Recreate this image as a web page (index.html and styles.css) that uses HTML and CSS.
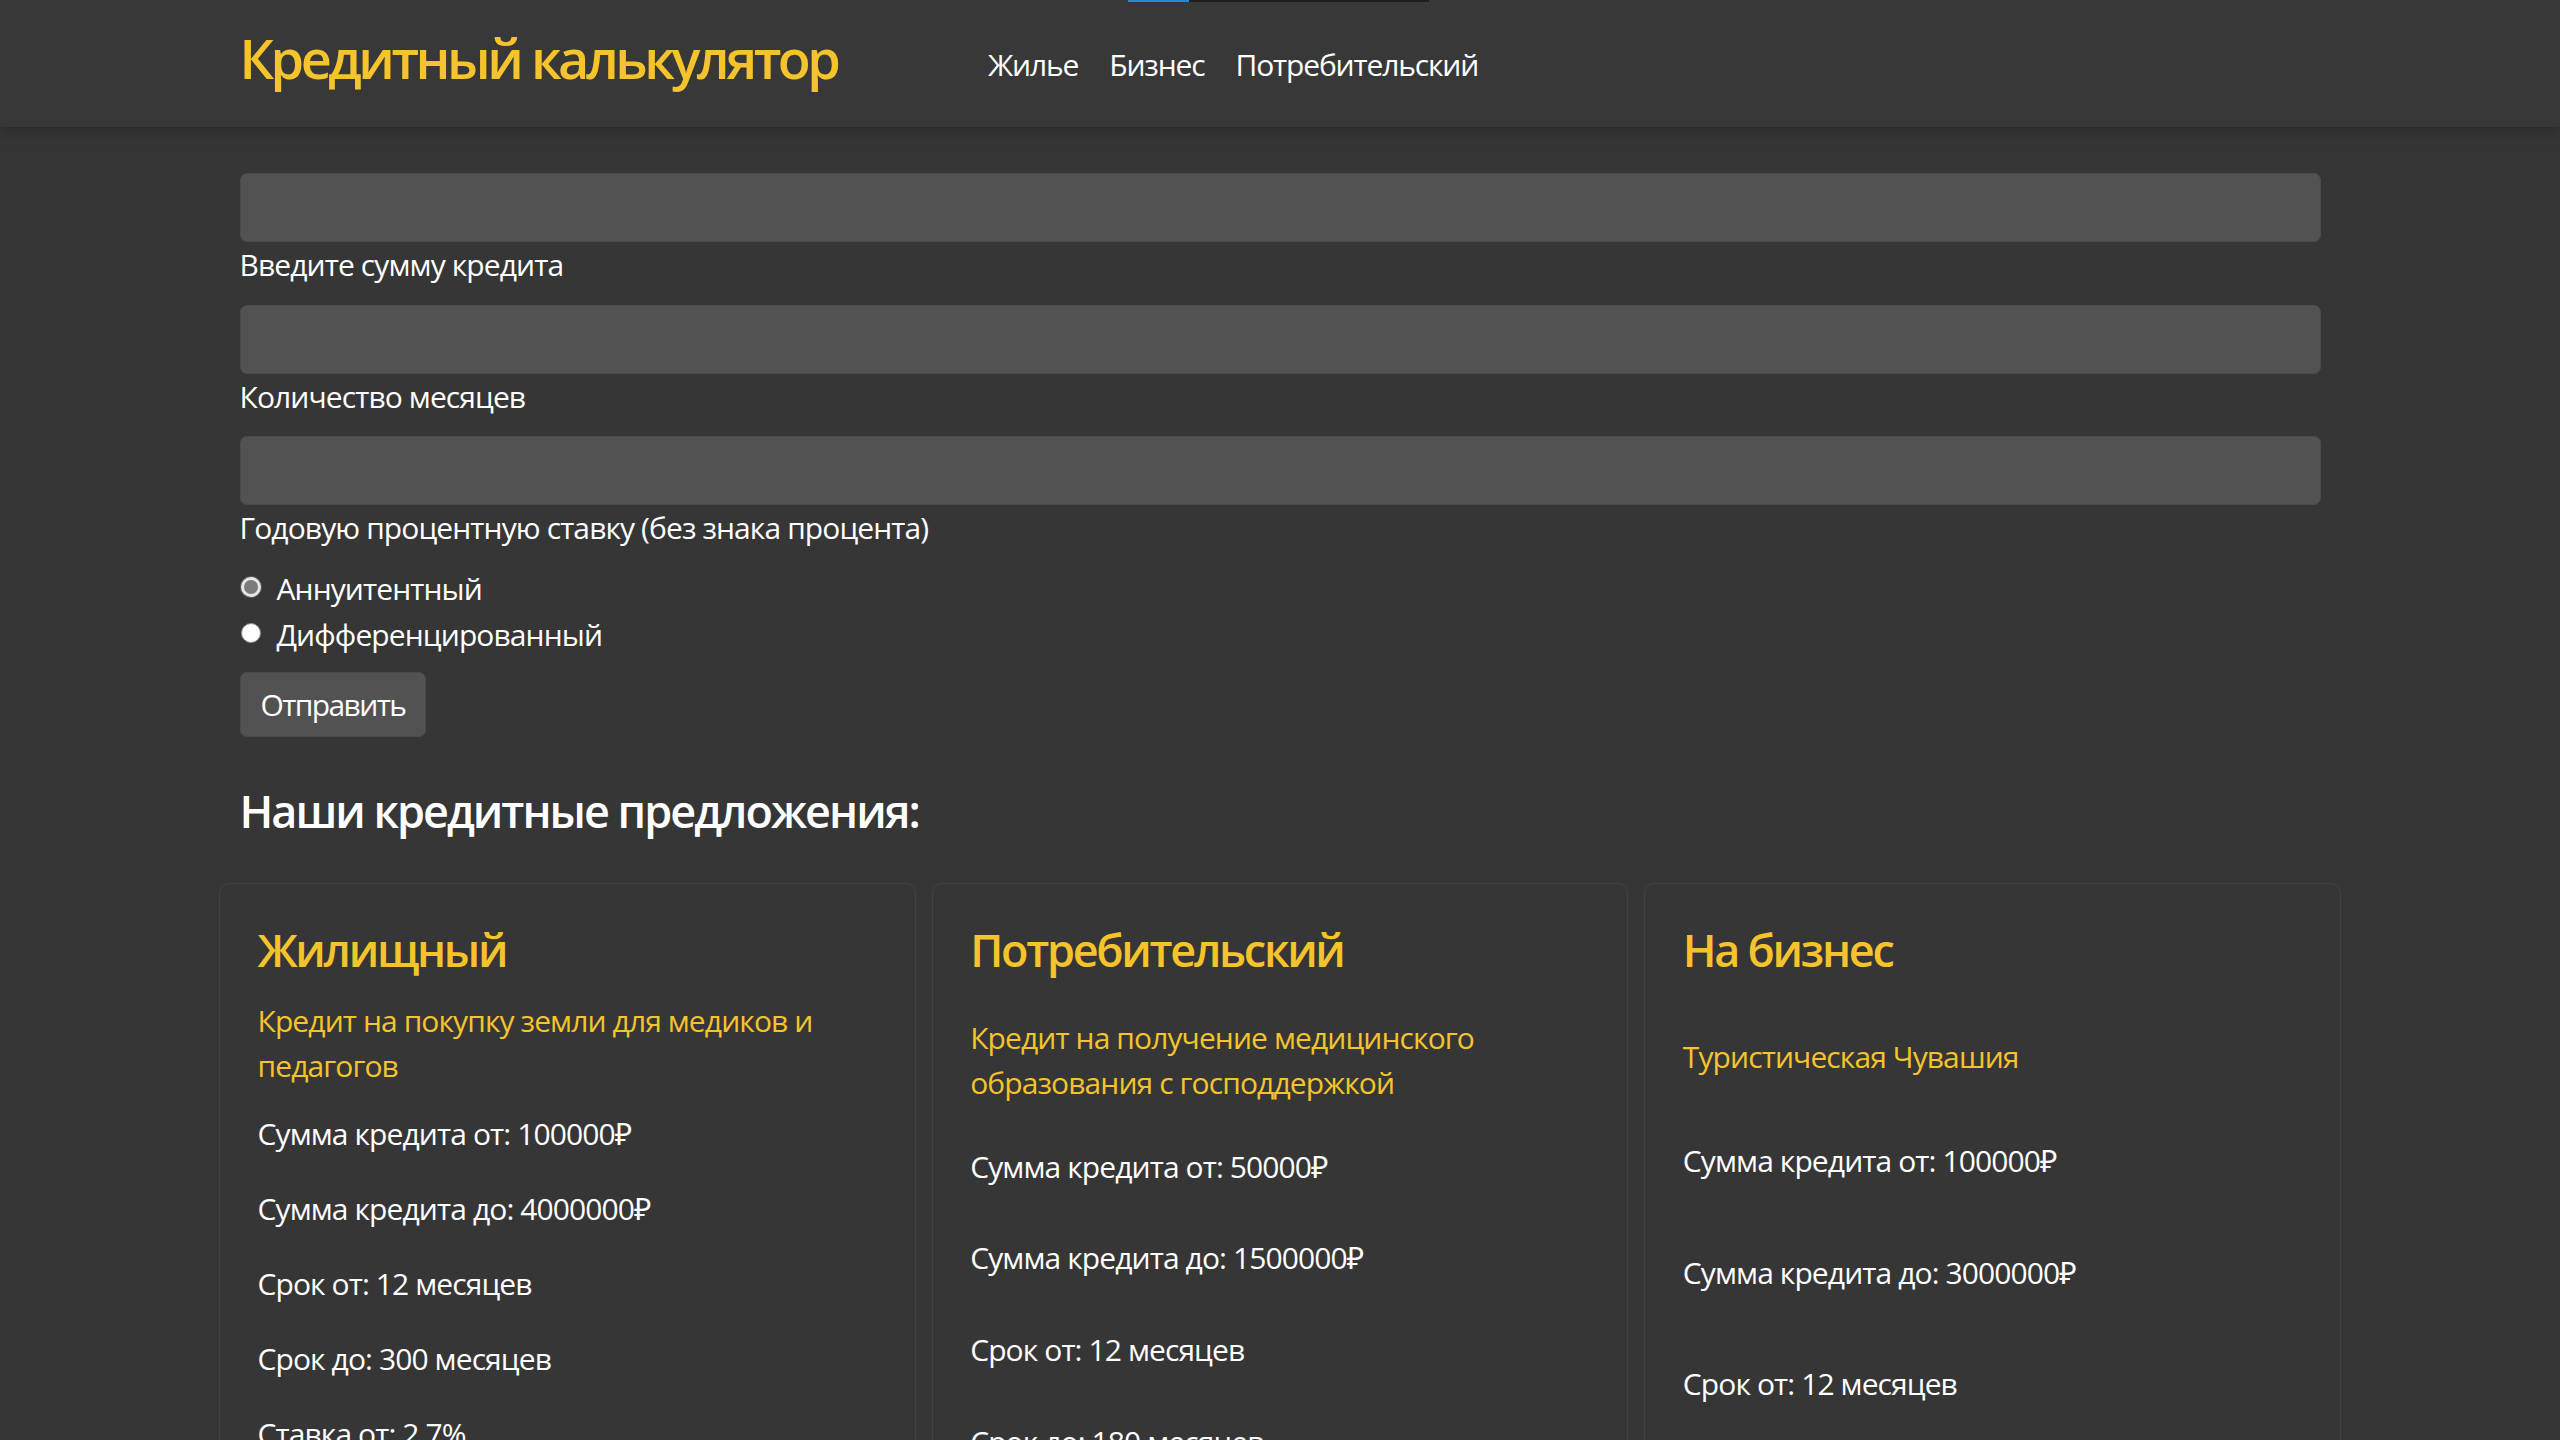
FILE: index.html
```html
<!DOCTYPE html>
<html lang="ru">
<head>
<meta charset="utf-8">
<title>Кредитный калькулятор</title>
<link rel="stylesheet" href="styles.css">
</head>
<body>
<div class="load-bar"><span class="load-bar__fill"></span></div>
<header class="site-header">
  <div class="container header-inner">
    <a class="brand" href="#">Кредитный калькулятор</a>
    <nav class="main-nav">
      <a class="nav-link" href="#">Жилье</a>
      <a class="nav-link" href="#">Бизнес</a>
      <a class="nav-link" href="#">Потребительский</a>
    </nav>
  </div>
</header>
<main class="container page">
  <form class="calc-form">
    <div class="field">
      <input class="field-input" type="text">
      <label class="field-label">Введите сумму кредита</label>
    </div>
    <div class="field">
      <input class="field-input" type="text">
      <label class="field-label">Количество месяцев</label>
    </div>
    <div class="field">
      <input class="field-input" type="text">
      <label class="field-label">Годовую процентную ставку (без знака процента)</label>
    </div>
    <div class="radios">
      <label class="radio"><span class="radio-mark radio-mark--focus"></span>Аннуитентный</label>
      <label class="radio"><span class="radio-mark"></span>Дифференцированный</label>
    </div>
    <button class="btn" type="button">Отправить</button>
  </form>

  <h2 class="offers-title">Наши кредитные предложения:</h2>

  <div class="offers">
    <article class="offer">
      <h3 class="offer-title">Жилищный</h3>
      <p class="offer-desc">Кредит на покупку земли для медиков и педагогов</p>
      <p class="offer-item">Сумма кредита от: 100000₽</p>
      <p class="offer-item">Сумма кредита до: 4000000₽</p>
      <p class="offer-item">Срок от: 12 месяцев</p>
      <p class="offer-item">Срок до: 300 месяцев</p>
      <p class="offer-item">Ставка от: 2.7%</p>
      <p class="offer-item">Ставка до: 6%</p>
      <p class="offer-item">Первоначальный взнос от: 20%</p>
      <p class="offer-item">Возраст заемщика от: 21 года</p>
      <p class="offer-item">Возраст заемщика до: 65 лет</p>
      <p class="offer-item">Обеспечение: залог</p>
    </article>
    <article class="offer">
      <h3 class="offer-title">Потребительский</h3>
      <p class="offer-desc">Кредит на получение медицинского образования с господдержкой</p>
      <p class="offer-item">Сумма кредита от: 50000₽</p>
      <p class="offer-item">Сумма кредита до: 1500000₽</p>
      <p class="offer-item">Срок от: 12 месяцев</p>
      <p class="offer-item">Срок до: 180 месяцев</p>
      <p class="offer-item">Ставка от: 3%</p>
      <p class="offer-item">Ставка до: 12%</p>
      <p class="offer-item">Возраст заемщика от: 18 лет</p>
      <p class="offer-item">Возраст заемщика до: 70 лет</p>
    </article>
    <article class="offer">
      <h3 class="offer-title">На бизнес</h3>
      <p class="offer-desc">Туристическая Чувашия</p>
      <p class="offer-item">Сумма кредита от: 100000₽</p>
      <p class="offer-item">Сумма кредита до: 3000000₽</p>
      <p class="offer-item">Срок от: 12 месяцев</p>
      <p class="offer-item">Срок до: 120 месяцев</p>
      <p class="offer-item">Ставка от: 5%</p>
      <p class="offer-item">Ставка до: 15%</p>
      <p class="offer-note">* для субъектов малого и среднего предпринимательства</p>
    </article>
  </div>
</main>
</body>
</html>
```

FILE: styles.css
```css
html, body {
  margin: 0;
  padding: 0;
}

body {
  background: #363636;
  color: #ffffff;
  font-family: "Segoe UI", "Open Sans", "Noto Sans", sans-serif;
  font-size: 30px;
  line-height: 45px;
  letter-spacing: -0.9px;
}

.load-bar {
  position: absolute;
  top: 0;
  left: 1128px;
  width: 301px;
  height: 2px;
  background: #1e1e1e;
  z-index: 5;
}

.load-bar__fill {
  display: block;
  width: 61px;
  height: 100%;
  background: #1b8fd6;
}

.container {
  width: 2081px;
  margin: 0 auto;
}

.site-header {
  position: relative;
  z-index: 2;
  height: 127px;
  background: #383838;
  box-shadow: 0 5px 14px rgba(0, 0, 0, 0.22);
}

.header-inner {
  display: flex;
  align-items: flex-start;
}

.brand {
  margin-top: 25.5px;
  margin-right: 135px;
  color: #f5c32c;
  font-size: 54px;
  line-height: 64.8px;
  font-weight: 600;
  text-decoration: none;
  letter-spacing: -3.5px;
}

.main-nav {
  display: flex;
  margin-top: 42px;
}

.nav-link {
  padding: 0 15.5px;
  color: #ffffff;
  text-decoration: none;
  letter-spacing: -1.15px;
}

.page {
  padding-top: 46px;
}

.calc-form {
  display: flex;
  flex-direction: column;
}

.field {
  display: flex;
  flex-direction: column;
  margin-bottom: 17.5px;
}

.field-input {
  display: block;
  box-sizing: border-box;
  width: 100%;
  height: 69px;
  margin: 0;
  background: #525252;
  border: 1px solid #4b4b4b;
  border-radius: 7px;
}

.radios {
  display: flex;
  flex-direction: column;
  margin-top: -2.5px;
}

.radio {
  display: flex;
  align-items: center;
  height: 46px;
}

.radio-mark {
  box-sizing: border-box;
  width: 20px;
  height: 20px;
  margin: 0 16px 3px 1px;
  border-radius: 50%;
  background: #ffffff;
  border: 1px solid #8a8a8a;
}

.radio-mark--focus {
  background: #7a7a7a;
  border: 3px solid #e6e6e6;
  box-shadow: 0 0 0 1px #5a5a5a;
}

.btn {
  align-self: flex-start;
  margin-top: 15px;
  padding: 9px 20px;
  background: #525252;
  border: 1px solid #4b4b4b;
  border-radius: 7px;
  color: #ffffff;
  font: inherit;
  line-height: 45px;
  letter-spacing: -1.6px;
}

.offers-title {
  margin: 47px 0 45px;
  font-size: 45px;
  line-height: 54px;
  font-weight: 600;
  letter-spacing: -2px;
}

.offers {
  display: grid;
  grid-template-columns: repeat(3, 1fr);
  gap: 16px;
  margin: 0 -20.5px;
}

.offer {
  display: flex;
  flex-direction: column;
  justify-content: space-between;
  padding: 39px 37.5px 37.5px;
  border: 1px solid #424242;
  border-radius: 10px;
}

.offer-title {
  margin: 0 0 21px;
  color: #f5c32c;
  font-size: 45px;
  line-height: 54px;
  font-weight: 600;
  letter-spacing: -2.3px;
}

.offer-desc {
  margin: 0 0 22.5px;
  color: #f5c32c;
}

.offer-item {
  margin: 0 0 30px;
}

.offer-note {
  margin: 0 0 30px;
  font-size: 20px;
  line-height: 24px;
  letter-spacing: 0;
  white-space: nowrap;
  overflow: hidden;
  text-overflow: ellipsis;
}
```
